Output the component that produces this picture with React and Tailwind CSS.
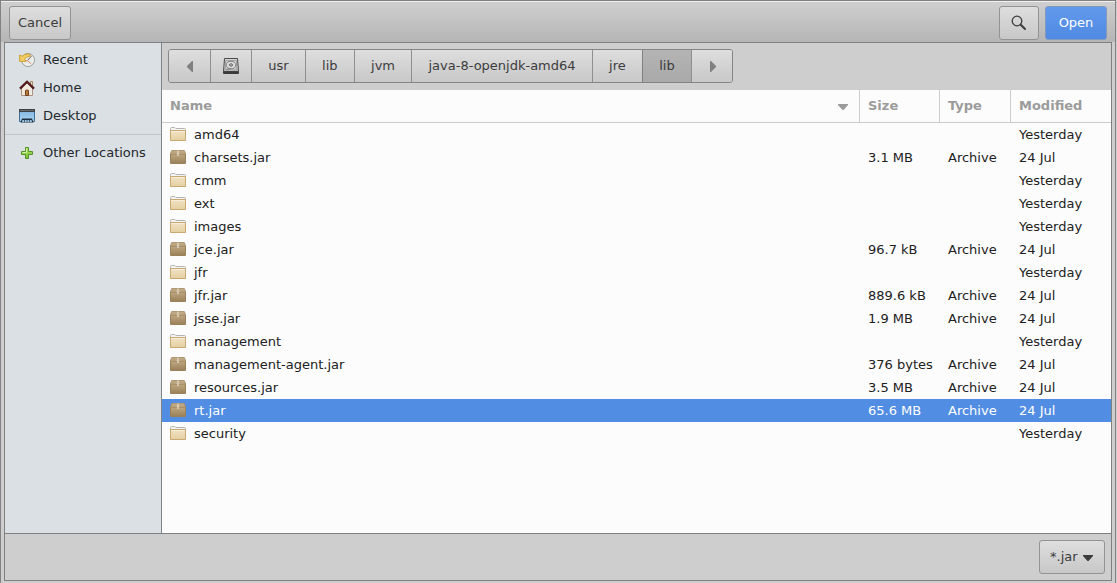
import { useState } from "react";

const files = [
  { name: "amd64", modified: "Yesterday" },
  { name: "charsets.jar", size: "3.1 MB", modified: "24 Jul" },
  { name: "cmm", modified: "Yesterday" },
  { name: "ext", modified: "Yesterday" },
  { name: "images", modified: "Yesterday" },
  { name: "jce.jar", size: "96.7 kB", modified: "24 Jul" },
  { name: "jfr", modified: "Yesterday" },
  { name: "jfr.jar", size: "889.6 kB", modified: "24 Jul" },
  { name: "jsse.jar", size: "1.9 MB", modified: "24 Jul" },
  { name: "management", modified: "Yesterday" },
  { name: "management-agent.jar", size: "376 bytes", modified: "24 Jul" },
  { name: "resources.jar", size: "3.5 MB", modified: "24 Jul" },
  { name: "rt.jar", size: "65.6 MB", modified: "24 Jul" },
  { name: "security", modified: "Yesterday" },
];

const raised =
  "bg-linear-to-b from-[#dedede] to-[#c8c8c8] text-[#3c3c3c]";
const button =
  "flex h-[34px] items-center justify-center rounded-[3px] border px-2 ";

function Gradient({ id, from, to }) {
  return (
    <linearGradient id={id} x1="0" y1="0" x2="0" y2="1">
      <stop offset="0" stopColor={from} />
      <stop offset="1" stopColor={to} />
    </linearGradient>
  );
}

function IconDefs() {
  return (
    <svg className="absolute size-0" aria-hidden="true">
      <defs>
        <Gradient id="folderFill" from="#f0e2c4" to="#e6d0a2" />
        <Gradient id="boxFill" from="#bba47f" to="#9c825a" />
        <Gradient id="boxLid" from="#c3ad8a" to="#b39b75" />
        <Gradient id="screenFill" from="#7fb2de" to="#a9d6f4" />
        <Gradient id="plusFill" from="#b4e36c" to="#79c02f" />
        <Gradient id="diskFill" from="#d9d9d9" to="#c2c2c2" />
      </defs>
    </svg>
  );
}

function Icon({ viewBox = "0 0 16 16", children }) {
  return (
    <svg className="size-4 shrink-0" viewBox={viewBox} aria-hidden="true">
      {children}
    </svg>
  );
}

function FolderIcon() {
  return (
    <Icon viewBox="0 1 16 16">
      <path d="M.5 14V2.500q0-1 1-1h3.300l1 1h8.700q1 0 1 1V14z" fill="#f4f4f4" stroke="#b4b4b4" />
      <path d="M.5 4.500h15v10H.5z" fill="url(#folderFill)" stroke="#c9a971" />
      <path d="M1 5.500h14" stroke="#faf2e0" opacity=".8" />
    </Icon>
  );
}

function PackageIcon() {
  return (
    <Icon viewBox="0 1 16 16">
      <path d="M2.500 1h11q1 0 1.500 1l1 3v9q0 1-1 1H1q-1 0-1-1V5l1-3q.5-1 1.500-1z" fill="#9a815a" />
      <path d="M2.500 1.500h11q.7 0 1 .8L15.500 6H.5l1-3.700q.3-.8 1-.8z" fill="url(#boxLid)" />
      <path d="M1 6h14v8H1z" fill="url(#boxFill)" />
      <path d="M1 5.500h14" stroke="#a89069" />
      <path d="M7 1.500h2V7H7z" fill="#dccfb9" opacity=".8" />
      <path d="M6 4.500h4" stroke="#d8cab2" opacity=".5" />
    </Icon>
  );
}

function RecentIcon() {
  return (
    <Icon>
      <circle cx="9" cy="8" r="6.400" fill="#e8e8e5" stroke="#90908c" />
      <circle cx="9" cy="8" r="5.300" fill="none" stroke="#fafafa" />
      <path d="m12.500 4-4 4.500" fill="none" stroke="#686868" />
      <path d="m12 11.800-3.500-3.300-2.500.5" fill="none" stroke="#e0705f" strokeWidth=".8" />
      <path d="M12 3.800Q9.500.3 5.500 2.600L3.200 4.200.6 3v6.400h6.300L5.400 7Q7.500 4.500 12 3.800z" fill="#f2cd65" stroke="#c89c2b" strokeWidth=".9" />
    </Icon>
  );
}

function HomeIcon() {
  return (
    <Icon>
      <path d="M11.500 1.500h2V7h-2z" fill="#f0dfc6" stroke="#a78365" />
      <path d="M2.500 8 8 2.800 13.500 8v7.500h-11z" fill="#f2e9de" stroke="#ab9480" />
      <path d="M6.500 15.500V11q0-1 1-1h1q1 0 1 1v4.500z" fill="#b87837" stroke="#6c4220" />
      <path d="m1 8.600 7-6.800 7 6.800" fill="none" stroke="#431418" strokeWidth="2.200" />
      <path d="m1.500 8 6.500-6.300L14.500 8" fill="none" stroke="#7b252a" strokeWidth=".7" />
    </Icon>
  );
}

function DesktopIcon() {
  return (
    <Icon>
      <path d="M.5 1.500h15v12H.5z" fill="url(#screenFill)" stroke="#426e94" />
      <path d="M0 1h16v3H0z" fill="#3c4146" />
      <path d="M1 2.500h14" stroke="#666b70" />
      <path d="M3 10.500h10l1.500 4h-13z" fill="#1f3040" />
      <path d="M3.500 12h1.800v2H3zM6 12h1.700v2H6zM8.400 12H10v2H8.400zM10.700 12h1.800l.5 2h-2.300z" fill="#9cc8e8" />
    </Icon>
  );
}

function PlusIcon() {
  return (
    <Icon>
      <path d="M6.500 2.500h3v4h4v3h-4v4h-3v-4h-4v-3h4z" fill="url(#plusFill)" stroke="#529326" strokeLinejoin="round" />
      <path d="M7.500 3.500v4h-4" fill="none" stroke="#d5f2a6" />
    </Icon>
  );
}

function DiskIcon() {
  return (
    <Icon>
      <path d="M1.500.5h13l1 13H.5z" fill="url(#diskFill)" stroke="#494949" />
      <path d="M0 13.500h16V15q0 1-1 1H1q-1 0-1-1z" fill="#3b3b3b" />
      <path d="M2.700 2.500h10.600l.7 9.500H2z" fill="none" stroke="#a0a0a0" />
      <ellipse cx="8" cy="7" rx="4.800" ry="3.800" fill="#dcdcdc" stroke="#808080" />
      <ellipse cx="8" cy="7" rx="1.600" ry="1.200" fill="#c4c4c4" stroke="#666" />
      <path d="m3.500 11.500 4-1" stroke="#777" />
    </Icon>
  );
}

function SearchIcon() {
  return (
    <Icon>
      <circle cx="6" cy="6" r="4.800" fill="none" stroke="#3c3c3c" strokeWidth="1.300" />
      <path d="m9.800 9.800 4.200 4.200" stroke="#3c3c3c" strokeWidth="2" strokeLinecap="round" />
    </Icon>
  );
}

function ArrowIcon({ d }) {
  return (
    <Icon>
      <path d={d} fill="currentColor" />
    </Icon>
  );
}

function Place({ icon, children }) {
  return (
    <li>
      <a href="#" className="flex h-7 items-center gap-2 px-3.5 text-[#22282c]">
        {icon}
        {children}
      </a>
    </li>
  );
}

function PathButton({ active, label, className = "grow px-4", children, ...rest }) {
  const tone = active
    ? "border-[#808080] bg-linear-to-b from-[#b4b4b4] to-[#a9a9a9] text-[#3c3c3c]"
    : "border-[#8f8f8f] bg-linear-to-b from-[#dedede] to-[#c8c8c8] text-[#3c3c3c]";
  return (
    <button
      type="button"
      aria-label={label}
      className={`flex items-center justify-center border-l first:border-l-0 ${tone} ${className}`}
      {...rest}
    >
      {children}
    </button>
  );
}

export default function App() {
  const [selected, setSelected] = useState("rt.jar");
  const [folder, setFolder] = useState(5);
  const path = ["usr", "lib", "jvm", "java-8-openjdk-amd64", "jre", "lib"];

  return (
    <div className="flex min-h-screen flex-col bg-[#cecece] pr-px font-['DejaVu_Sans',sans-serif] text-[13px] leading-4">
      <IconDefs />
      <div className="flex flex-1 flex-col border-x border-t border-[#838183] pb-0.5">
        <header className="flex h-[41px] items-center justify-between border-t border-[#f0f0f0] bg-linear-to-b from-[#cfcfcf] to-[#b5b5b5] px-2 pt-0.5">
          <button type="button" className={`${button} ${raised} border-[#939393]`}>
            Cancel
          </button>
          <div className="flex gap-1.5">
            <button type="button" aria-label="Search" className={`${button} ${raised} w-10 border-[#939393]`}>
              <SearchIcon />
            </button>
            <button
              type="button"
              className={`${button} w-[62px] border-[#8199bd] bg-linear-to-b from-[#6199ec] to-[#508ae2] text-white`}
            >
              Open
            </button>
          </div>
        </header>

        <main className="mx-[3px] flex flex-1 flex-col border border-[#808080]">
          <div className="flex flex-1">
            <nav aria-label="Places" className="w-[157px] shrink-0 border-r border-[#808487] bg-[#dbe0e4]">
              <ul className="border-b border-[#c1c5c9] pt-[3px] pb-1">
                <Place icon={<RecentIcon />}>Recent</Place>
                <Place icon={<HomeIcon />}>Home</Place>
                <Place icon={<DesktopIcon />}>Desktop</Place>
              </ul>
              <ul className="pt-1">
                <Place icon={<PlusIcon />}>Other Locations</Place>
              </ul>
            </nav>

            <section className="flex min-w-0 flex-1 flex-col bg-[#fcfcfc]">
              <div className="flex h-[47px] items-start bg-[#cecece] px-1.5 pt-1.5">
                <div className="flex h-[34px] min-w-[565px] overflow-hidden rounded-[3px] border border-[#858585]">
                  <PathButton label="Back" className="w-[41px]">
                    <span className="text-[#808080]">
                      <ArrowIcon d="M11 3v11h-1L5 9V8l5-5z" />
                    </span>
                  </PathButton>
                  <PathButton label="File system root" className="w-[41px]">
                    <DiskIcon />
                  </PathButton>
                  {path.map((part, i) => (
                    <PathButton key={i} active={folder === i} onClick={() => setFolder(i)}>
                      {part}
                    </PathButton>
                  ))}
                  <PathButton label="Forward" className="w-[41px]">
                    <span className="text-[#808080]">
                      <ArrowIcon d="M6 3v11h1l5-5V8L7 3z" />
                    </span>
                  </PathButton>
                </div>
              </div>

              <table className="w-full table-fixed border-separate border-spacing-0 text-left">
                <thead className="text-[#9b9b9b]">
                  <tr className="h-[33px]">
                    <th className="border-r border-b border-[#cccccc] px-2 py-0">
                      <div className="flex items-center justify-between">
                        Name
                        <ArrowIcon d="M3 6h10v1L8.500 12h-1L3 7z" />
                      </div>
                    </th>
                    <th className="w-20 border-r border-b border-[#cccccc] px-2 py-0">Size</th>
                    <th className="w-[71px] border-r border-b border-[#cccccc] px-2 py-0">Type</th>
                    <th className="w-[100px] border-b border-[#cccccc] px-2 py-0">Modified</th>
                  </tr>
                </thead>
                <tbody>
                  {files.map((file) => (
                    <tr
                      key={file.name}
                      aria-selected={selected === file.name}
                      onClick={() => setSelected(file.name)}
                      className={
                        selected === file.name
                          ? "h-[23px] bg-[#528de4] text-white"
                          : "h-[23px] text-[#212121]"
                      }
                    >
                      <td className="px-2 py-0">
                        <div className="flex items-center gap-2">
                          {file.size ? <PackageIcon /> : <FolderIcon />}
                          {file.name}
                        </div>
                      </td>
                      <td className="px-2 py-0 whitespace-nowrap">{file.size}</td>
                      <td className="px-2 py-0">{file.size && "Archive"}</td>
                      <td className="px-2 py-0">{file.modified}</td>
                    </tr>
                  ))}
                </tbody>
              </table>
            </section>
          </div>

          <footer className="flex h-[47px] items-center justify-end border-t border-[#808080] bg-[#cecece] px-1.5">
            <div className="relative text-[#3c3c3c]">
              <select
                aria-label="File filter"
                className="block h-[34px] appearance-none rounded-[3px] border border-[#939393] bg-linear-to-b from-[#dedede] to-[#c8c8c8] pr-[26px] pl-2.5"
              >
                <option>*.jar</option>
              </select>
              <span className="pointer-events-none absolute inset-y-0 right-[9px] flex items-center">
                <ArrowIcon d="M3 6h10v1L8.500 12h-1L3 7z" />
              </span>
            </div>
          </footer>
        </main>
      </div>
    </div>
  );
}
